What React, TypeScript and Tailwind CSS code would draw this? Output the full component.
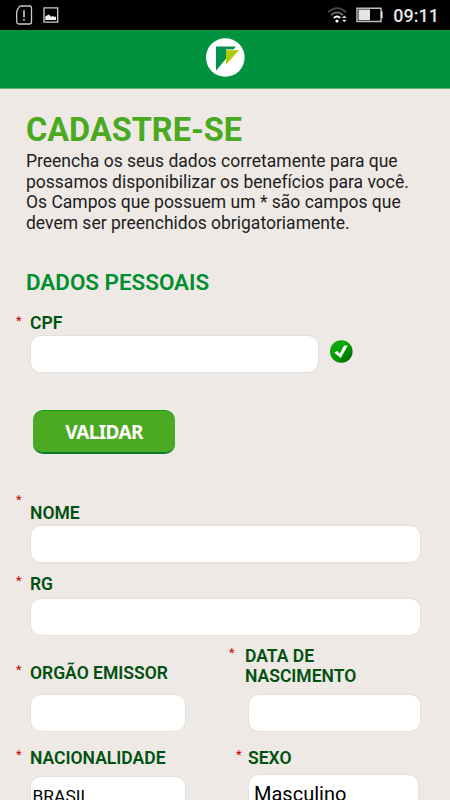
import type { ReactNode } from "react";

function Label({
  children,
  star = "",
  className = "",
}: {
  children: ReactNode;
  star?: string;
  className?: string;
}) {
  return (
    <div className={`flex ${className}`}>
      <span
        className={`h-5 w-3.5 shrink-0 text-[13px] leading-5 text-[#c80000] ${star}`}
      >
        *
      </span>
      <label className="text-[17.500px] leading-5 font-semibold whitespace-nowrap text-[#00500f]">
        {children}
      </label>
    </div>
  );
}

function Field({
  children,
  className = "",
}: {
  children?: ReactNode;
  className?: string;
}) {
  return (
    <div
      className={`h-[38px] shrink-0 rounded-[11px] border border-[#e0e0e0] bg-white text-black ${className}`}
    >
      {children}
    </div>
  );
}

function StatusBar() {
  return (
    <div className="flex h-[30px] shrink-0 items-center bg-black pr-[11px] pl-4">
      <svg width="17" height="20" viewBox="0 0 17 20" fill="none">
        <path
          d="M5 1h8.5a2 2 0 0 1 2 2v14a2 2 0 0 1-2 2H2.700a2 2 0 0 1-2-2V6.500l2-4Q3.500 1 5 1z"
          stroke="#c9c9c9"
          strokeWidth="1.300"
        />
        <path d="M8 5.200v7M8 14v1.800" stroke="#b9b9b9" strokeWidth="1.800" />
      </svg>
      <svg className="ml-2.5" width="16" height="16" viewBox="0 0 16 16">
        <path d="M1 .9h13.700v14.200H1z" fill="none" stroke="#cfcfcf" strokeWidth="1.300" />
        <path
          d="M2.300 13V9.500l2.500-1.500 1.500-.2 1.700 2 2-.7 1.500 1 1.500-.5V13z"
          fill="#f2f2f2"
        />
      </svg>
      <svg className="ml-auto" width="21" height="18" viewBox="0 0 21 18" fill="none">
        <path d="M1 6.300q9-8.500 18 0" stroke="#4c4c4c" strokeWidth="1.700" />
        <path d="M4 9.200q6-5.500 12 0" stroke="#777" strokeWidth="1.700" />
        <path d="M6.800 12q3.200-3 6.400 0" stroke="#fff" strokeWidth="1.800" />
        <circle cx="10" cy="15" r="1.600" fill="#fff" />
        <path d="M15 12l2.300-2.500 2.300 2.500zM15 13.700l2.300 2.500 2.300-2.500z" fill="#ddd" />
      </svg>
      <svg className="mr-px ml-2" width="27" height="16" viewBox="0 0 27 16">
        <path d="M1 1.200h24v13.300H1z" fill="none" stroke="#bdbdbd" strokeWidth="1.500" />
        <path d="M2.500 2.500h11.500v10.700H2.500z" fill="#e4e4e4" />
        <path d="M25 4.500h1.600v6.500H25z" fill="#e4e4e4" />
      </svg>
      <span className="mt-px ml-[9px] text-[18px] leading-5 font-medium text-[#e6e6e6]">
        09:11
      </span>
    </div>
  );
}

export default function App() {
  return (
    <div className="flex h-[800px] w-[450px] flex-col overflow-hidden bg-[#eee9e5] font-['Roboto',sans-serif]">
      <StatusBar />
      <header className="flex h-[59px] shrink-0 justify-center border-b border-[#62ad68] bg-[#00923d] pt-2">
        <svg width="40" height="40" viewBox="0 0 40 40">
          <circle cx="20.300" cy="19.500" r="19.300" fill="#fff" />
          <path d="M11 8.500h20L11 32.700z" fill="#00924c" />
          <path d="M21 12h13.200L21 26.500z" fill="#b1cb00" />
          <path d="M21 11.700h13" stroke="#fff" strokeWidth=".8" />
        </svg>
      </header>

      <main className="flex flex-col">
        <div className="pt-[25px] pl-[26px]">
          <h1 className="text-[32.500px] leading-8 font-bold text-[#4aaa1f]">
            CADASTRE-SE
          </h1>
          <p className="mt-[5px] text-[17.500px] leading-[20.500px] whitespace-nowrap text-[#1d1d1d]">
            Preencha os seus dados corretamente para que
            <br />
            possamos disponibilizar os benefícios para você.
            <br />
            Os Campos que possuem um * são campos que
            <br />
            devem ser preenchidos obrigatoriamente.
          </p>
          <h2 className="mt-[37px] text-[22.400px] leading-6 font-semibold text-[#008f2f]">
            DADOS PESSOAIS
          </h2>
        </div>

        <Label className="mt-[19px] pl-4" star="-mt-[2px]">
          CPF
        </Label>
        <div className="mt-[2px] flex items-center pl-[30px]">
          <Field className="w-[289px]" />
          <svg className="-mt-1.5 ml-2.5" width="25" height="25" viewBox="0 0 25 25">
            <defs>
              <linearGradient id="ok" x1="0.100" y1="0.100" x2="0.900" y2="0.900">
                <stop offset="0" stopColor="#13aa13" />
                <stop offset="0.500" stopColor="#009f00" />
                <stop offset="1" stopColor="#006800" />
              </linearGradient>
            </defs>
            <circle cx="12.300" cy="12.500" r="11.300" fill="url(#ok)" />
            <path d="M5.200 13.500l3-1.500 2.500 2.700 4.300-8.200h3.800L11.700 19z" fill="#fff" />
          </svg>
        </div>

        <button className="mt-[37px] ml-[33px] h-11 w-[142px] rounded-[10px] border-t border-b-2 border-t-[#0aa00a] border-b-[#087a2c] bg-[#4caa22] font-['Noto_Sans',sans-serif] text-[19px] leading-5 font-bold tracking-[-0.6px] text-white">
          VALIDAR
        </button>

        <Label className="mt-[49px] pl-4" star="-mt-[13px]">
          NOME
        </Label>
        <Field className="mt-[2px] ml-[30px] w-[391px]" />
        <Label className="mt-[11px] pl-4" star="-mt-[3px]">
          RG
        </Label>
        <Field className="mt-[4px] ml-[30px] w-[391px]" />

        <div className="mt-[10px] grid h-12 grid-cols-[213px_1fr] pl-4">
          <Label className="pt-[17px]" star="-mt-[3px]">
            ORGÃO EMISSOR
          </Label>
          <Label star="-mt-[3px] w-4!">
            DATA DE
            <br />
            NASCIMENTO
          </Label>
        </div>
        <div className="flex gap-[62px] pl-[30px]">
          <Field className="w-[156px]" />
          <Field className="w-[173px]" />
        </div>

        <div className="mt-[16px] grid h-5 grid-cols-[220px_1fr] pl-4">
          <Label star="-mt-[3px]">NACIONALIDADE</Label>
          <Label star="-mt-[3px] w-3!">SEXO</Label>
        </div>
        <div className="mt-[6px] flex gap-[62px] pl-[30px]">
          <Field className="mt-[2px] w-[156px] pt-[9px] pl-[1.5px] text-[17.400px] leading-5">
            BRASIL
          </Field>
          <Field className="w-[171px] pt-[7px] pl-[5px] text-[20px] leading-6">
            Masculino
          </Field>
        </div>
      </main>
    </div>
  );
}
